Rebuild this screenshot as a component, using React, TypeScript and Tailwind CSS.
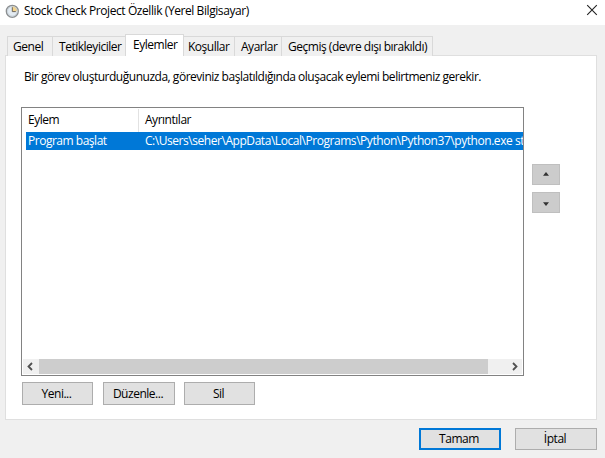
import type { ReactNode } from "react";

function ClockIcon() {
  return (
    <svg className="mt-[4px] ml-[5px] block h-[15px] w-[15px] shrink-0" viewBox="0 0 15 15">
      <circle cx="7.3" cy="7.3" r="6" fill="#e3ebf2" stroke="#8c8f91" strokeWidth="1.3" />
      <path d="M7.3 7.3V2.3A5 5 0 0 1 12.3 7.3Z" fill="#f5d48c" />
      <circle cx="7.3" cy="7.3" r="4.8" fill="none" stroke="#b9c4cd" strokeWidth=".6" />
      <path d="M7.3 3.2V7.6H10.8" fill="none" stroke="#6c6559" strokeWidth="1" />
    </svg>
  );
}

function Tab({ className, children }: { className: string; children: ReactNode }) {
  return (
    <div className={`h-[20px] border-t border-r border-[#d9d9d9] bg-[#f0f0f0] leading-[19px] ${className}`}>
      {children}
    </div>
  );
}

function Button({ className, children }: { className: string; children: ReactNode }) {
  return (
    <button className={`flex items-center justify-center bg-[#e1e1e1] pr-[2px] whitespace-nowrap ${className}`}>
      {children}
    </button>
  );
}

export default function App() {
  return (
    <div className="flex h-[458px] w-[605px] flex-col overflow-hidden bg-[#f0f0f0] font-['Open_Sans','Noto_Sans',sans-serif] text-[12px] tracking-[-0.48px] whitespace-nowrap text-black">
      <header className="flex h-[25px] shrink-0 bg-white">
        <ClockIcon />
        <h1 className="ml-[4px] text-[12px] leading-[21px] font-normal tracking-[-0.42px]">
          Stock Check Project Özellik (Yerel Bilgisayar)
        </h1>
        <svg className="mt-[4px] mr-[7px] ml-auto block h-[12px] w-[12px]" viewBox="0 0 12 12">
          <path d="M1.2 1.2L10.8 10.8M10.8 1.2L1.2 10.8" stroke="#222" strokeWidth="1.1" />
        </svg>
      </header>

      <nav className="z-10 mt-[9px] -mb-px ml-[7px] flex h-[22px] shrink-0 items-end">
        <Tab className="w-[46px] border-l pl-[5px]">Genel</Tab>
        <Tab className="w-[72px] border-r-0 pl-[6px]">Tetikleyiciler</Tab>
        <div className="h-[22px] w-[59px] border-x border-t border-[#d9d9d9] bg-white pl-[7px] leading-[19px]">
          Eylemler
        </div>
        <Tab className="w-[51px] pl-[4px]">Koşullar</Tab>
        <Tab className="w-[47px] pl-[6px]">Ayarlar</Tab>
        <Tab className="w-[151px] pl-[6px]">Geçmiş (devre dışı bırakıldı)</Tab>
      </nav>

      <main className="ml-[5px] flex h-[365px] w-[592px] shrink-0 flex-col border border-[#dfdfdf] bg-white pl-[15px]">
        <p className="mt-[12px] ml-[3px] h-[18px] leading-[18px]">
          Bir görev oluşturduğunuzda, göreviniz başlatıldığında oluşacak eylemi belirtmeniz gerekir.
        </p>
        <div className="mt-[21px] flex">
          <section className="flex h-[269px] w-[503px] flex-col border border-[#828282] pt-px">
            <div className="flex h-[23px] leading-[22px]">
              <div className="w-[117px] border-r border-[#e2e2e2] pl-[6px]">Eylem</div>
              <div className="pl-[6px]">Ayrıntılar</div>
            </div>
            <div className="ml-[4px] flex h-[18px] overflow-hidden bg-[#0078d7] leading-[18px] text-white">
              <div className="w-[117px] shrink-0 pl-[2px]">Program başlat</div>
              <div className="pl-[2px] tracking-[-0.45px]">
                C:\Users\seher\AppData\Local\Programs\Python\Python37\python.exe st
              </div>
            </div>
            <div className="mt-auto mr-px mb-px ml-px flex h-[15px] bg-[#f0f0f0]">
              <svg className="block h-[15px] w-[16px]" viewBox="0 0 16 15">
                <path d="M9 4L5.5 7.5L9 11" fill="none" stroke="#505050" strokeWidth="1.8" />
              </svg>
              <div className="h-full w-[449px] bg-[#cdcdcd]" />
              <svg className="ml-auto block h-[15px] w-[16px]" viewBox="0 0 16 15">
                <path d="M7 4L10.5 7.5L7 11" fill="none" stroke="#505050" strokeWidth="1.8" />
              </svg>
            </div>
          </section>
          <div className="mt-[57px] ml-[8px] flex flex-col gap-[7px]">
            <button className="flex h-[21px] w-[28px] items-center justify-center border border-[#bfbfbf] bg-[#ccc]">
              <svg className="mb-[2px] block h-[4px] w-[6px]" viewBox="0 0 6 4">
                <path d="M0 3.8L3 0L6 3.8Z" fill="#333" />
              </svg>
            </button>
            <button className="flex h-[21px] w-[28px] items-center justify-center border border-[#bfbfbf] bg-[#ccc]">
              <svg className="mt-[2px] block h-[4px] w-[6px]" viewBox="0 0 6 4">
                <path d="M0 .2L3 4L6 .2Z" fill="#333" />
              </svg>
            </button>
          </div>
        </div>
        <div className="mt-[6px] ml-px flex">
          <Button className="h-[23px] w-[71px] border border-[#adadad]">Yeni...</Button>
          <Button className="ml-[10px] h-[23px] w-[72px] border border-[#adadad]">Düzenle...</Button>
          <Button className="ml-[9px] h-[23px] w-[71px] border border-[#adadad]">Sil</Button>
        </div>
      </main>

      <footer className="mt-[8px] flex justify-end pr-[8px]">
        <Button className="h-[22px] w-[82px] border-2 border-[#0078d7]">Tamam</Button>
        <Button className="ml-[14px] h-[22px] w-[82px] border border-[#adadad]">İptal</Button>
      </footer>
    </div>
  );
}
